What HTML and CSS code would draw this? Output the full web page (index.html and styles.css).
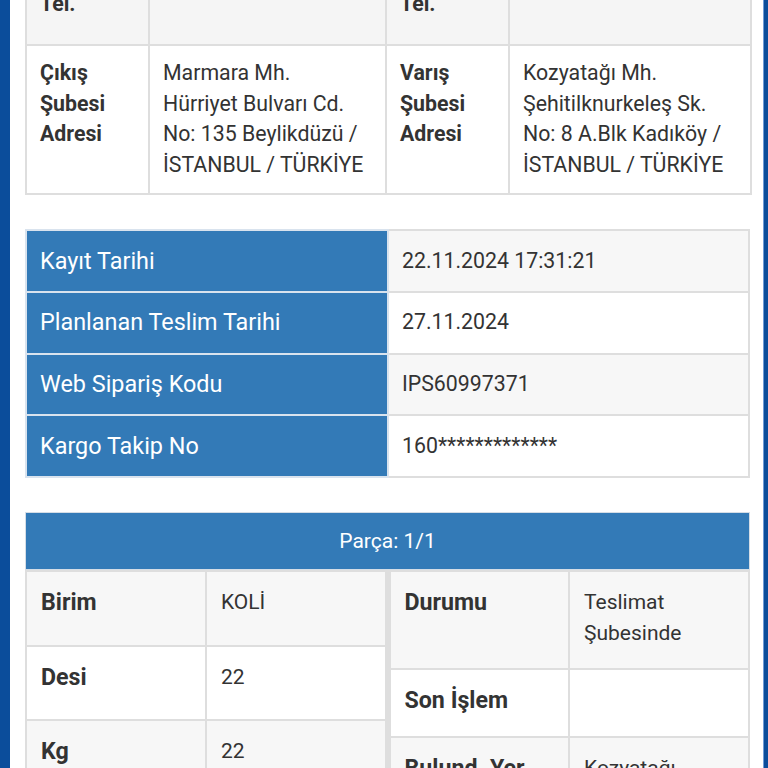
FILE: index.html
```html
<!DOCTYPE html>
<html lang="tr">
<head>
<meta charset="utf-8">
<title>Kargo Takip</title>
<link rel="stylesheet" href="styles.css">
</head>
<body>
<div class="screen">
  <div class="bar-left"></div>
  <main class="content">
    <table class="grid addr">
      <colgroup><col class="c1"><col class="c2"><col class="c3"><col class="c4"></colgroup>
      <tr class="tel-row">
        <th>Çıkış<br>Şubesi<br>Tel.</th><td></td>
        <th>Varış<br>Şubesi<br>Tel.</th><td></td>
      </tr>
      <tr class="white">
        <th>Çıkış<br>Şubesi<br>Adresi</th>
        <td>Marmara Mh.<br>Hürriyet Bulvarı Cd.<br>No: 135 Beylikdüzü /<br>İSTANBUL / TÜRKİYE</td>
        <th>Varış<br>Şubesi<br>Adresi</th>
        <td>Kozyatağı Mh.<br>Şehitilknurkeleş Sk.<br>No: 8 A.Blk Kadıköy /<br>İSTANBUL / TÜRKİYE</td>
      </tr>
    </table>

    <table class="grid dates">
      <colgroup><col class="k"><col class="v"></colgroup>
      <tr class="gray"><th>Kayıt Tarihi</th><td>22.11.2024 17:31:21</td></tr>
      <tr class="white"><th>Planlanan Teslim Tarihi</th><td>27.11.2024</td></tr>
      <tr class="gray"><th>Web Sipariş Kodu</th><td>IPS60997371</td></tr>
      <tr class="white"><th>Kargo Takip No</th><td>160*************</td></tr>
    </table>

    <section class="piece">
      <div class="piece-head">Parça: 1/1</div>
      <div class="piece-body">
        <table class="grid sub left">
          <colgroup><col class="h"><col class="h"></colgroup>
          <tr class="gray"><th>Birim</th><td>KOLİ</td></tr>
          <tr class="white"><th>Desi</th><td>22</td></tr>
          <tr class="gray"><th>Kg</th><td>22</td></tr>
        </table>
        <table class="grid sub right">
          <colgroup><col class="h"><col class="h"></colgroup>
          <tr class="gray"><th>Durumu</th><td>Teslimat<br>Şubesinde</td></tr>
          <tr class="white"><th>Son İşlem</th><td></td></tr>
          <tr class="gray"><th>Bulund. Yer</th><td>Kozyatağı</td></tr>
        </table>
      </div>
    </section>
  </main>
  <div class="bar-right"></div>
</div>
</body>
</html>
```

FILE: styles.css
```css
html, body {
  margin: 0;
  padding: 0;
  background: #ffffff;
}
body {
  height: 768px;
  overflow: hidden;
  font-family: Roboto, "Noto Sans", "Liberation Sans", sans-serif;
  color: #333333;
}
.screen {
  display: flex;
  height: 768px;
}
.bar-left {
  flex: 0 0 10px;
  background: #0b4d9b;
}
.bar-right {
  flex: 0 0 4px;
  background: #0b4d9b;
  border-left: 1px solid #6f9bd6;
}
.content {
  flex: 1 1 auto;
  padding: 0 13px 0 15px;
  min-width: 0;
}
.grid {
  width: 100%;
  border-collapse: collapse;
  table-layout: fixed;
  font-size: 21.3px;
  line-height: 30.67px;
}
.grid th, .grid td {
  border: 2px solid #dedede;
  text-align: left;
  vertical-align: top;
  padding: 13px;
}
.grid th { font-weight: 700; }
.grid td { font-weight: 400; }
.gray th, .gray td { background: #f7f7f7; }
.white th, .white td { background: #ffffff; }

/* address table */
.addr {
  margin-top: -87px;
  margin-bottom: 34px;
}
.addr .c1 { width: 123px; }
.addr .c2 { width: 237px; }
.addr .c3 { width: 123px; }
.addr .c4 { width: 242px; }
.addr th, .addr td { padding: 12.5px 13px; }
.addr .tel-row th, .addr .tel-row td {
  background: #f5f5f5;
  padding-bottom: 24px;
}

/* dates table */
.dates { margin-bottom: 34px; }
.dates .k { width: 362px; }
.dates th, .dates td {
  padding: 14.5px 13px;
}
.dates th {
  background: #337ab7;
  color: #ffffff;
  font-weight: 400;
  font-size: 23.4px;
  border-color: #d9e3ee;
}

/* piece */
.piece-head {
  background: #337ab7;
  color: #ffffff;
  text-align: center;
  font-size: 21px;
  line-height: 30.5px;
  padding: 13px 0 13px;
  border: 1px solid #d5dde6;
}
.piece-body {
  display: grid;
  grid-template-columns: 1fr 1fr;
  align-items: start;
  background: #ffffff;
}
.sub { line-height: 30.5px; }
.sub th {
  font-size: 23.2px;
}
.sub th, .sub td {
  padding: 15px 14px 20px 14px;
}
.sub td { font-size: 21px; }
.sub.left th, .sub.left td { padding-bottom: 27px; }
.sub.left { border-right: 2px solid #dedede; }
.sub.left tr > td:last-child { border-right-width: 3px; }
.sub.right tr > th:first-child { border-left-width: 3px; }
```
